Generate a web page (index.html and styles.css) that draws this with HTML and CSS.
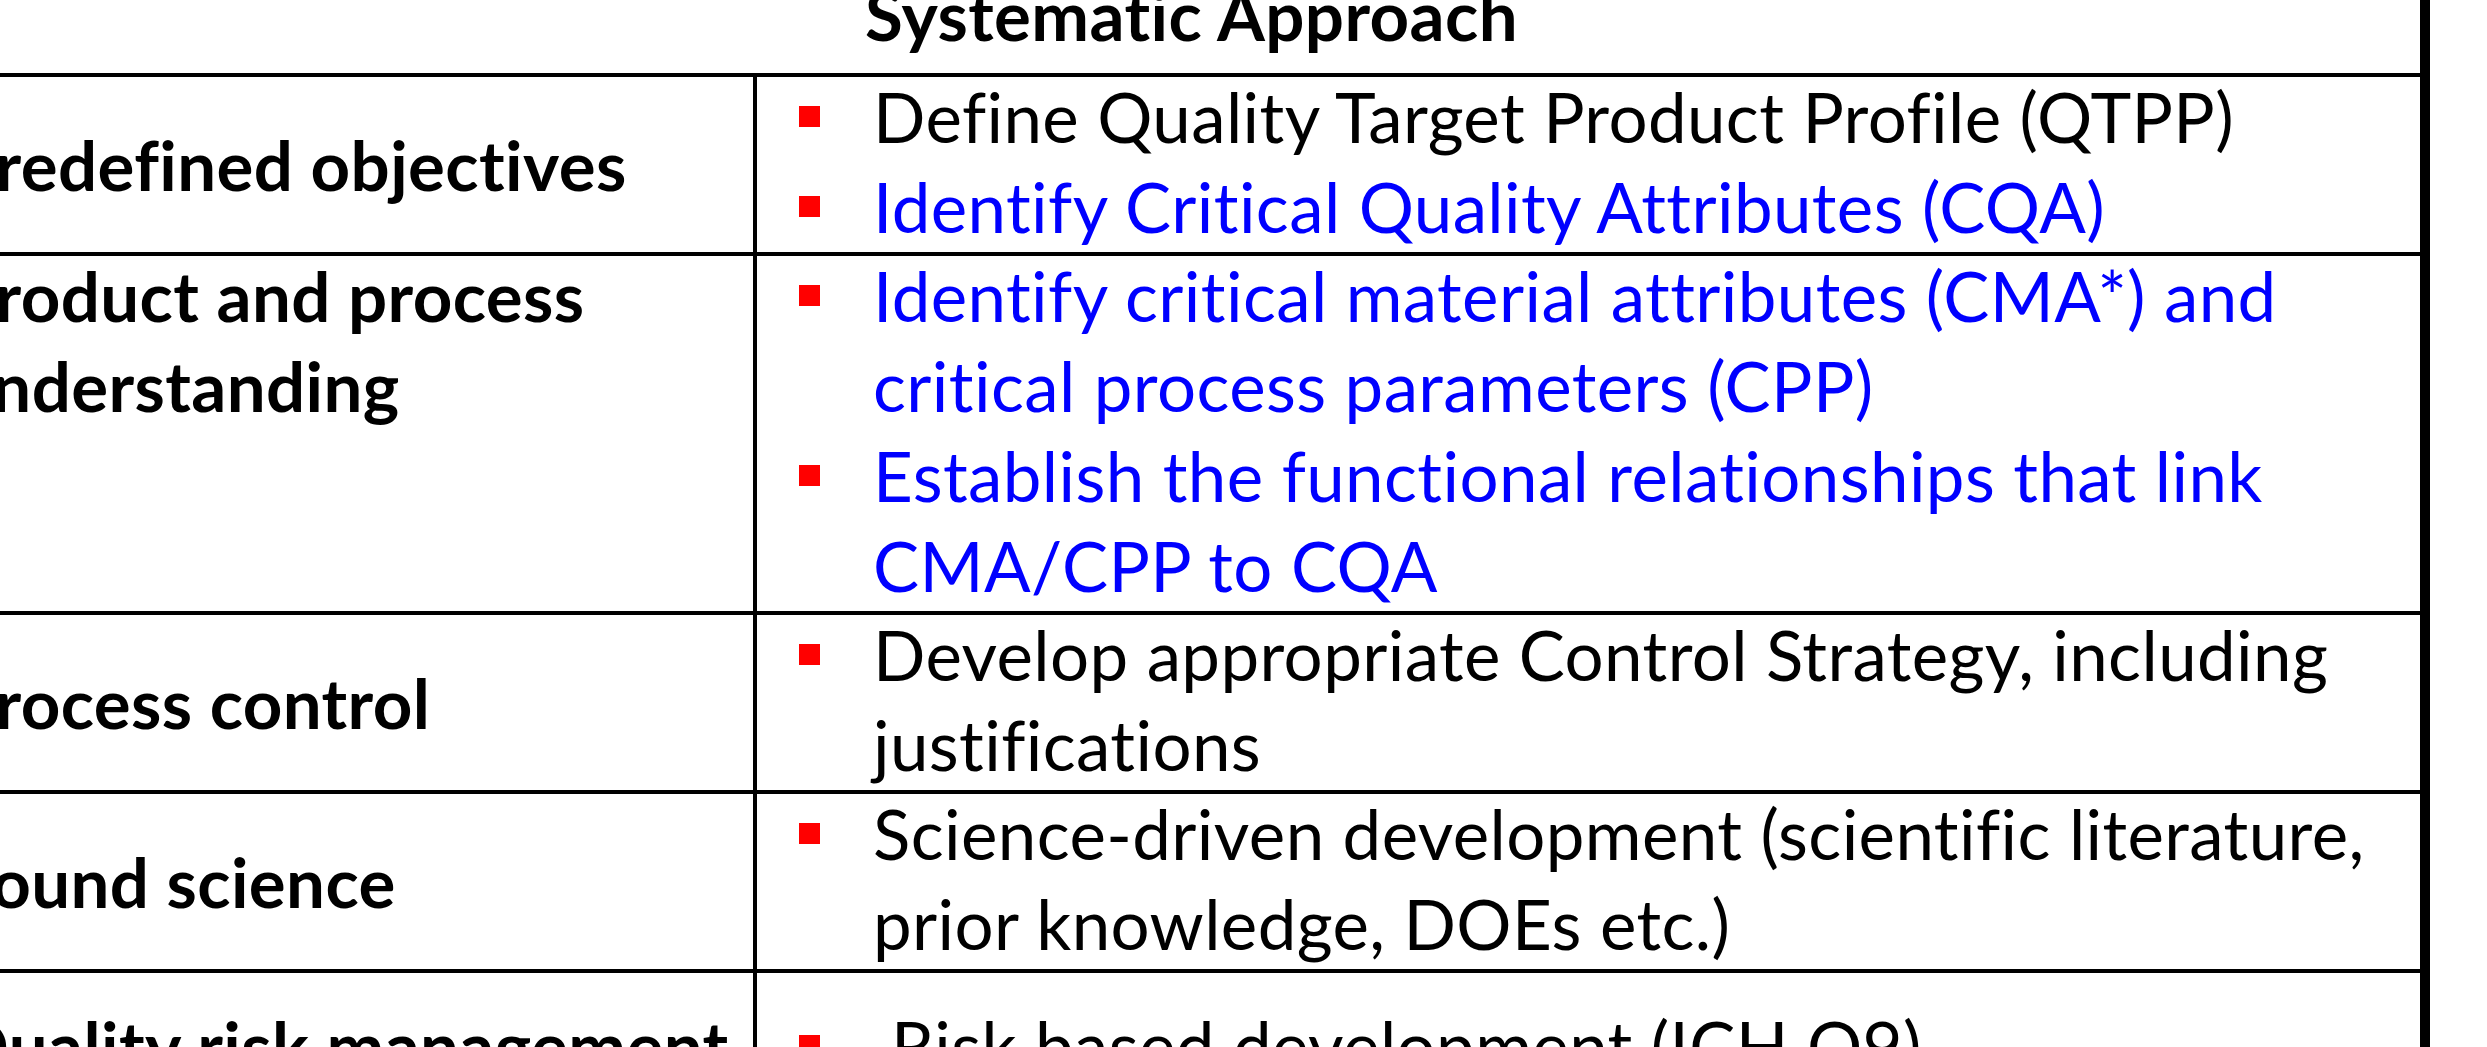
FILE: index.html
```html
<!DOCTYPE html>
<html lang="en">
<head>
<meta charset="utf-8">
<title>Systematic Approach</title>
<link rel="stylesheet" href="styles.css">
</head>
<body>
<div class="slide">
  <div class="head"><div class="head-text">Systematic Approach</div></div>

  <div class="label"><div class="label-text">Predefined objectives</div></div>
  <div class="cell">
    <ul class="items">
      <li class="item">Define Quality Target Product Profile (QTPP)</li>
      <li class="item blue">Identify Critical Quality Attributes (CQA)</li>
    </ul>
  </div>

  <div class="label label-top"><div class="label-text">Product and process<br>understanding</div></div>
  <div class="cell">
    <ul class="items">
      <li class="item blue"><span>Identify critical material attributes (CMA*) and<br>critical process parameters (CPP)</span></li>
      <li class="item blue"><span>Establish the functional relationships that link<br>CMA/CPP to CQA</span></li>
    </ul>
  </div>

  <div class="label"><div class="label-text">Process control</div></div>
  <div class="cell">
    <ul class="items">
      <li class="item"><span>Develop appropriate Control Strategy, including<br>justifications</span></li>
    </ul>
  </div>

  <div class="label"><div class="label-text">Sound science</div></div>
  <div class="cell">
    <ul class="items">
      <li class="item"><span>Science-driven development (scientific literature,<br>prior knowledge, DOEs etc.)</span></li>
    </ul>
  </div>

  <div class="label last"><div class="label-text">Quality risk management</div></div>
  <div class="cell last">
    <ul class="items">
      <li class="item">&nbsp;Risk based development (ICH Q9)</li>
    </ul>
  </div>
</div>
</body>
</html>
```

FILE: styles.css
```css
html, body {
  margin: 0;
  padding: 0;
  overflow: hidden;
  background: #ffffff;
}

body {
  font-family: "Lato", "Open Sans", sans-serif;
  font-size: 69px;
  letter-spacing: 0.4px;
  color: #000000;
}

.slide {
  display: grid;
  grid-template-columns: 800px 1667px;
  width: 2467px;
  margin-left: -47px;
  border-right: 10px solid #000000;
}

.head {
  grid-column: 1 / 3;
  height: 73px;
  text-align: center;
  font-weight: 700;
  line-height: 90px;
  white-space: nowrap;
  padding-left: 10px;
}

.head-text {
  margin-top: -30px;
}

.label {
  border-top: 4px solid #000000;
  display: flex;
  align-items: center;
  font-weight: 700;
  line-height: 90px;
  white-space: nowrap;
}

.label-top {
  align-items: flex-start;
}

.label-top .label-text {
  margin-top: -5px;
}

.cell {
  border-top: 4px solid #000000;
  border-left: 4px solid #000000;
  padding-left: 42px;
}

.items {
  list-style: none;
  margin: -5px 0 0 0;
  padding: 0;
}

.item {
  display: flex;
  line-height: 90px;
  white-space: nowrap;
}

.item::before {
  content: "";
  flex: none;
  width: 21px;
  height: 21px;
  margin: 34px 53px 0 0;
  background: #ff0000;
}

.blue {
  color: #0000ff;
}

.last {
  height: 146px;
}

.cell.last {
  display: flex;
  align-items: center;
}

.cell.last .items {
  margin: 0;
}
```
